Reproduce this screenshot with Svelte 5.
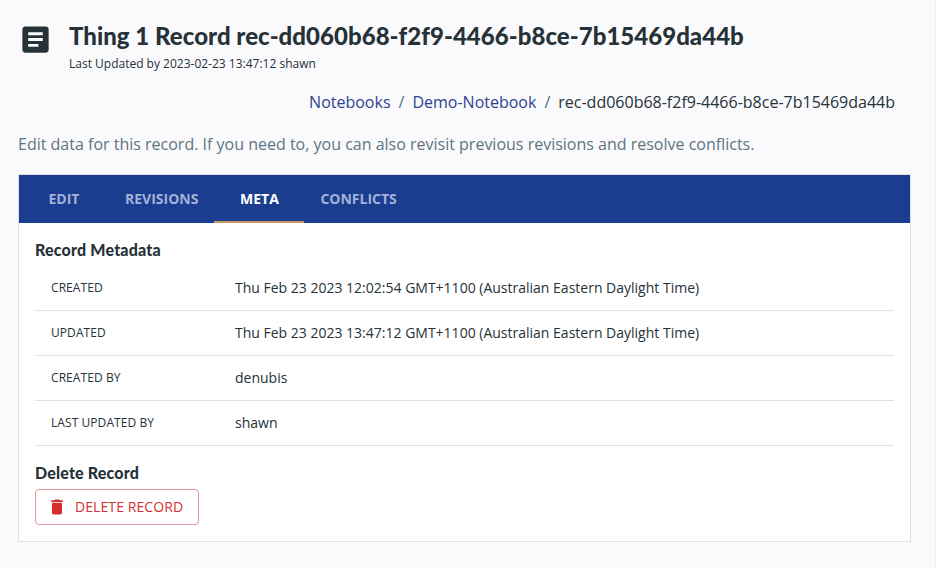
<script>
  const rows = [
    ['CREATED', 'Thu Feb 23 2023 12:02:54 GMT+1100 (Australian Eastern Daylight Time)'],
    ['UPDATED', 'Thu Feb 23 2023 13:47:12 GMT+1100 (Australian Eastern Daylight Time)'],
    ['CREATED BY', 'denubis'],
    ['LAST UPDATED BY', 'shawn']
  ];
  const tabs = ['EDIT', 'REVISIONS', 'META', 'CONFLICTS'];
  const record = 'rec-dd060b68-f2f9-4466-b8ce-7b15469da44b';
  let active = $state('META');
</script>

<main>
  <header>
    <svg class="article" viewBox="0 0 24 24"><path d="M19 3H5c-1.1 0-2 .9-2 2v14c0 1.1.9 2 2 2h14c1.1 0 2-.9 2-2V5c0-1.1-.9-2-2-2zm-5 14H7v-2h7v2zm3-4H7v-2h10v2zm0-4H7V7h10v2z" /></svg>
    <div>
      <h1>Thing 1 Record {record}</h1>
      <p class="updated">Last Updated by 2023-02-23 13:47:12 shawn</p>
    </div>
  </header>
  <nav class="crumbs">
    <a href="#notebooks">Notebooks</a><i>/</i><a href="#demo">Demo-Notebook</a><i>/</i><span>{record}</span>
  </nav>
  <p class="intro">Edit data for this record. If you need to, you can also revisit previous revisions and resolve conflicts.</p>
  <section class="card">
    <div class="tabs">
      {#each tabs as tab}
        <button class:active={tab === active} onclick={() => (active = tab)}>{tab}</button>
      {/each}
    </div>
    <div class="panel">
      <h2>Record Metadata</h2>
      <dl>
        {#each rows as [label, value]}
          <div class="row"><dt>{label}</dt><dd>{value}</dd></div>
        {/each}
      </dl>
      <h2 class="second">Delete Record</h2>
      <button class="delete">
        <svg viewBox="0 0 24 24"><path d="M6 19c0 1.1.9 2 2 2h8c1.1 0 2-.9 2-2V7H6v12zM19 4h-3.5l-1-1h-5l-1 1H5v2h14V4z" /></svg>
        <span>DELETE RECORD</span>
      </button>
    </div>
  </section>
</main>

<style>
  :global(body) { background: #fafafc; }
  main { box-sizing: border-box; height: 568px; padding: 20px 24px 0 18px; border-right: 1px solid #f0f0f2; font-family: 'Open Sans', sans-serif; color: #263238; overflow: hidden; }
  h1, h2, p, dl, dd { margin: 0; }
  header { display: flex; height: 64px; }
  .article { width: 35px; height: 35px; margin: 2px 16px 0 0; fill: #263238; flex: none; }
  h1 { font: 900 24px/32px Lato, sans-serif; letter-spacing: 0.03px; white-space: nowrap; }
  .updated { font-size: 12px; line-height: 20px; margin-top: 2px; white-space: nowrap; }
  .crumbs { display: flex; justify-content: flex-end; padding-right: 16px; margin-top: 6px; font-size: 16px; line-height: 24px; white-space: nowrap; }
  .crumbs a { color: #303f8f; text-decoration: none; }
  .crumbs i { font-style: normal; margin: 0 8px; color: #546e7a; }
  .intro { margin-top: 18px; font-size: 16px; line-height: 24px; color: #607480; white-space: nowrap; }
  .card { box-sizing: border-box; margin-top: 18px; height: 368px; border: 1px solid #e0e0e0; background: #fff; }
  .tabs { display: flex; height: 48px; background: #1a3d90; }
  .tabs button { min-width: 90px; border: 0; border-bottom: 2px solid transparent; background: none; padding: 1px 16px 0; font: 700 14px/45px 'Open Sans', sans-serif; color: #a3b1d9; }
  .tabs .active { color: #fff; border-color: #cc975f; }
  .panel { padding: 15px 16px 0; }
  h2 { font: 900 16px/24px Lato, sans-serif; letter-spacing: 0.18px; }
  dl { margin-top: 4px; }
  .row { box-sizing: border-box; display: flex; height: 45px; padding-bottom: 2px; border-bottom: 1px solid #e0e0e0; align-items: center; }
  dt { width: 184px; padding-left: 16px; font-size: 12px; letter-spacing: 0.07px; flex: none; }
  dd { font-size: 14px; }
  .second { margin-top: 15px; }
  .delete { display: flex; align-items: center; box-sizing: border-box; width: 164px; height: 36px; margin-top: 4px; padding: 0 0 0 11px; border: 1px solid #e09a9e; border-radius: 4px; background: #fff; color: #d32f2f; font: 14px 'Open Sans', sans-serif; letter-spacing: 0.08px; }
  .delete span { padding-bottom: 2px; }
  .delete svg { width: 20px; height: 20px; margin-right: 8px; fill: currentColor; }
</style>
